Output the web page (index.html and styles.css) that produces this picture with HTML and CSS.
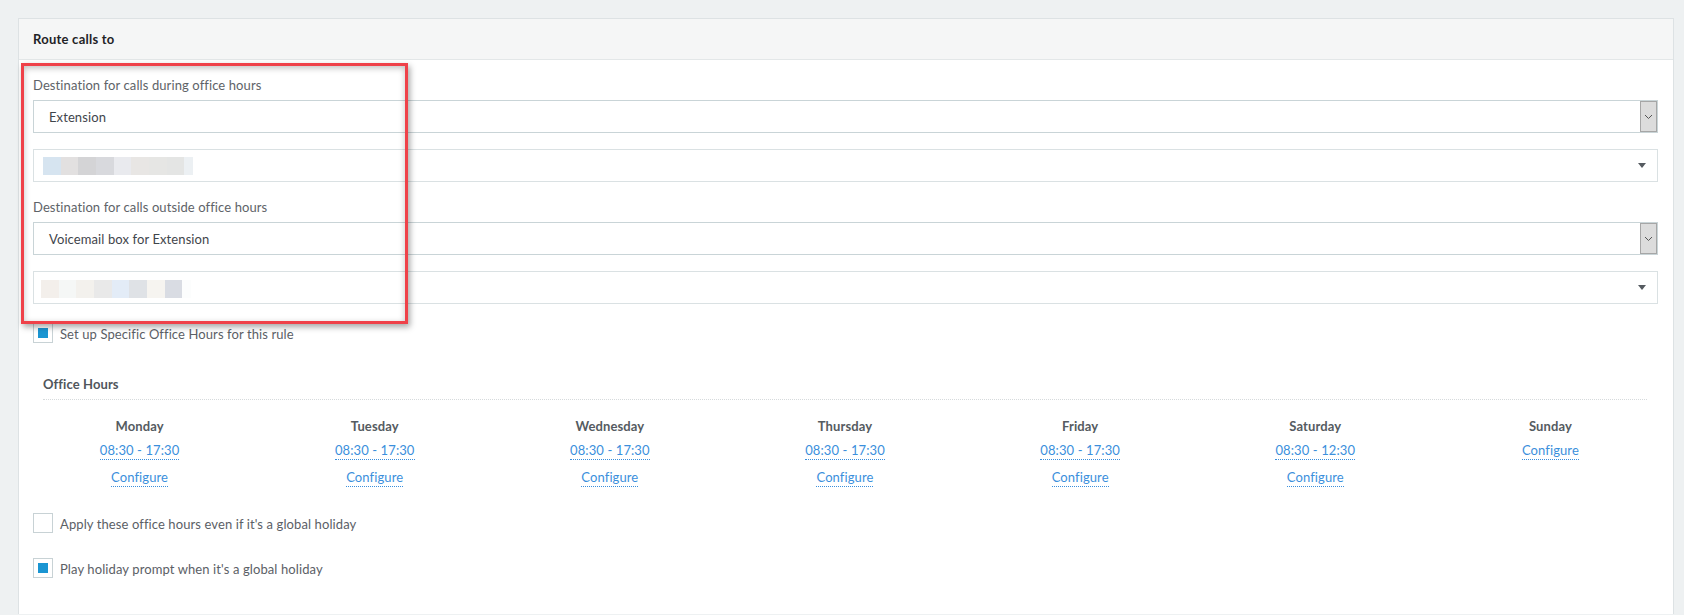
FILE: index.html
```html
<!DOCTYPE html>
<html lang="en">
<head>
    <meta charset="UTF-8">
    <meta name="viewport" content="width=device-width, initial-scale=1.0">
    <title>Route calls to</title>
    <link rel="stylesheet" href="styles.css">
</head>
<body>
    <div class="panel">
        <div class="panel-head">Route calls to</div>
        <div class="panel-body">
            <label class="field-label">Destination for calls during office hours</label>
            <div class="native-select">
                <span>Extension</span>
                <span class="select-btn">
                    <svg width="9" height="6" viewBox="0 0 9 6"><path d="M1 1l3.5 3.5L8 1" fill="none" stroke="#555" stroke-width="1"/></svg>
                </span>
            </div>
            <div class="combo">
                <span class="redacted redacted-a"></span>
                <span class="caret"></span>
            </div>

            <label class="field-label">Destination for calls outside office hours</label>
            <div class="native-select">
                <span>Voicemail box for Extension</span>
                <span class="select-btn">
                    <svg width="9" height="6" viewBox="0 0 9 6"><path d="M1 1l3.5 3.5L8 1" fill="none" stroke="#555" stroke-width="1"/></svg>
                </span>
            </div>
            <div class="combo combo-b">
                <span class="redacted redacted-b"></span>
                <span class="caret"></span>
            </div>

            <div class="check-row first">
                <span class="check checked"></span>
                <span class="check-text">Set up Specific Office Hours for this rule</span>
            </div>

            <div class="office">
                <div class="office-title">Office Hours</div>
                <div class="days">
                    <div class="day">
                        <div class="day-name">Monday</div>
                        <a class="hours" href="#">08:30 - 17:30</a>
                        <a class="cfg" href="#">Configure</a>
                    </div>
                    <div class="day">
                        <div class="day-name">Tuesday</div>
                        <a class="hours" href="#">08:30 - 17:30</a>
                        <a class="cfg" href="#">Configure</a>
                    </div>
                    <div class="day">
                        <div class="day-name">Wednesday</div>
                        <a class="hours" href="#">08:30 - 17:30</a>
                        <a class="cfg" href="#">Configure</a>
                    </div>
                    <div class="day">
                        <div class="day-name">Thursday</div>
                        <a class="hours" href="#">08:30 - 17:30</a>
                        <a class="cfg" href="#">Configure</a>
                    </div>
                    <div class="day">
                        <div class="day-name">Friday</div>
                        <a class="hours" href="#">08:30 - 17:30</a>
                        <a class="cfg" href="#">Configure</a>
                    </div>
                    <div class="day">
                        <div class="day-name">Saturday</div>
                        <a class="hours" href="#">08:30 - 12:30</a>
                        <a class="cfg" href="#">Configure</a>
                    </div>
                    <div class="day">
                        <div class="day-name">Sunday</div>
                        <a class="hours" href="#">Configure</a>
                    </div>
                </div>
            </div>

            <div class="check-row holiday">
                <span class="check"></span>
                <span class="check-text">Apply these office hours even if it's a global holiday</span>
            </div>
            <div class="check-row prompt">
                <span class="check checked"></span>
                <span class="check-text">Play holiday prompt when it's a global holiday</span>
            </div>
        </div>

        <!-- annotation box drawn over the destination fields -->
        <div class="highlight"></div>
    </div>
</body>
</html>
```

FILE: styles.css
```css
body {
    margin: 0;
    padding: 18px 10px 0 18px;
    background: #eef1f2;
    font-family: Lato, "Liberation Sans", sans-serif;
    font-size: 13px;
    letter-spacing: 0.1px;
    color: #5b6066;
}
.panel {
    position: relative;
    background: #fff;
    border: 1px solid #dde2e4;
    border-bottom: 0;
}
.panel-head {
    height: 40px;
    line-height: 40px;
    padding: 0 14px;
    background: #f5f6f6;
    border-bottom: 1px solid #e3e7e8;
    font-weight: bold;
    letter-spacing: 0.25px;
    color: #1f2326;
}
.panel-body {
    padding: 16px 15px 36px 14px;
}
.field-label {
    display: block;
    line-height: 18px;
    margin-bottom: 6px;
    color: #5e6368;
}
.native-select {
    display: flex;
    justify-content: space-between;
    align-items: stretch;
    height: 33px;
    box-sizing: border-box;
    border: 1px solid #c9d4d7;
    padding-left: 15px;
    color: #3f454b;
    line-height: 32px;
    margin-bottom: 16px;
}
.select-btn {
    width: 17px;
    box-sizing: border-box;
    background: #dcdcdc;
    border: 1px solid #a6a6a6;
    display: flex;
    align-items: center;
    justify-content: center;
}
.combo {
    display: flex;
    justify-content: space-between;
    align-items: center;
    height: 33px;
    box-sizing: border-box;
    border: 1px solid #dae1e3;
    padding: 0 11px 0 9px;
    margin-bottom: 16px;
}
.combo-b {
    padding-left: 7px;
    margin-bottom: 19px;
}
.combo-b .redacted {
    margin-top: 3px;
}
.caret {
    width: 0;
    height: 0;
    border-top: 5px solid #555a60;
    border-left: 4px solid transparent;
    border-right: 4px solid transparent;
}
.redacted {
    display: block;
    width: 150px;
    height: 18px;
}
.redacted-a {
    background: linear-gradient(to right,
        #d6e4f0 0 18px, #e2e0e0 18px 35px, #d4d4d6 35px 53px, #d8d9dd 53px 71px,
        #e9eaee 71px 88px, #e8e6e4 88px 106px, #e6e6e4 106px 124px,
        #e4e5e4 124px 141px, #ecf0f3 141px 150px);
}
.redacted-b {
    background: linear-gradient(to right,
        #f3efeb 0 18px, #f5f7f6 18px 35px, #f3f1ed 35px 53px, #e9e9e9 53px 71px,
        #e3ecf7 71px 88px, #dfe2e6 88px 106px, #f6f4f0 106px 124px,
        #d9dce3 124px 141px, #fcfdfd 141px 150px);
}
.check-row {
    display: flex;
    align-items: center;
    gap: 7px;
    height: 20px;
}
.check-text {
    line-height: 18px;
    padding-top: 2px;
}
.check {
    width: 20px;
    height: 20px;
    box-sizing: border-box;
    border: 1px solid #c8d2d5;
    background: #fff;
    display: flex;
    align-items: center;
    justify-content: center;
}
.check.checked::after {
    content: "";
    width: 10px;
    height: 10px;
    background: #1a95d2;
}
.office {
    margin: 32px 11px 0 10px;
}
.office-title {
    font-weight: bold;
    color: #50565c;
    line-height: 18px;
    padding-bottom: 6px;
    border-bottom: 1px dotted #d6dadc;
}
.days {
    display: grid;
    grid-template-columns: repeat(7, 1fr);
    margin: 17px -21px 0;
}
.day {
    display: flex;
    flex-direction: column;
    align-items: center;
}
.day-name {
    font-weight: bold;
    color: #555b61;
    line-height: 18px;
}
.day a {
    color: #3b8fdc;
    text-decoration: none;
    line-height: 18px;
    border-bottom: 1px dotted #3b8fdc;
}
.hours {
    margin-top: 6px;
}
.cfg {
    margin-top: 8px;
}
.holiday {
    margin-top: 26px;
}
.prompt {
    margin-top: 25px;
}
.highlight {
    position: absolute;
    left: 2px;
    top: 44px;
    width: 387px;
    height: 261px;
    box-sizing: border-box;
    border: 3px solid #ef4149;
    box-shadow: 2px 3px 6px rgba(0, 0, 0, 0.35), inset 0 2px 6px rgba(0, 0, 0, 0.25);
}
```
